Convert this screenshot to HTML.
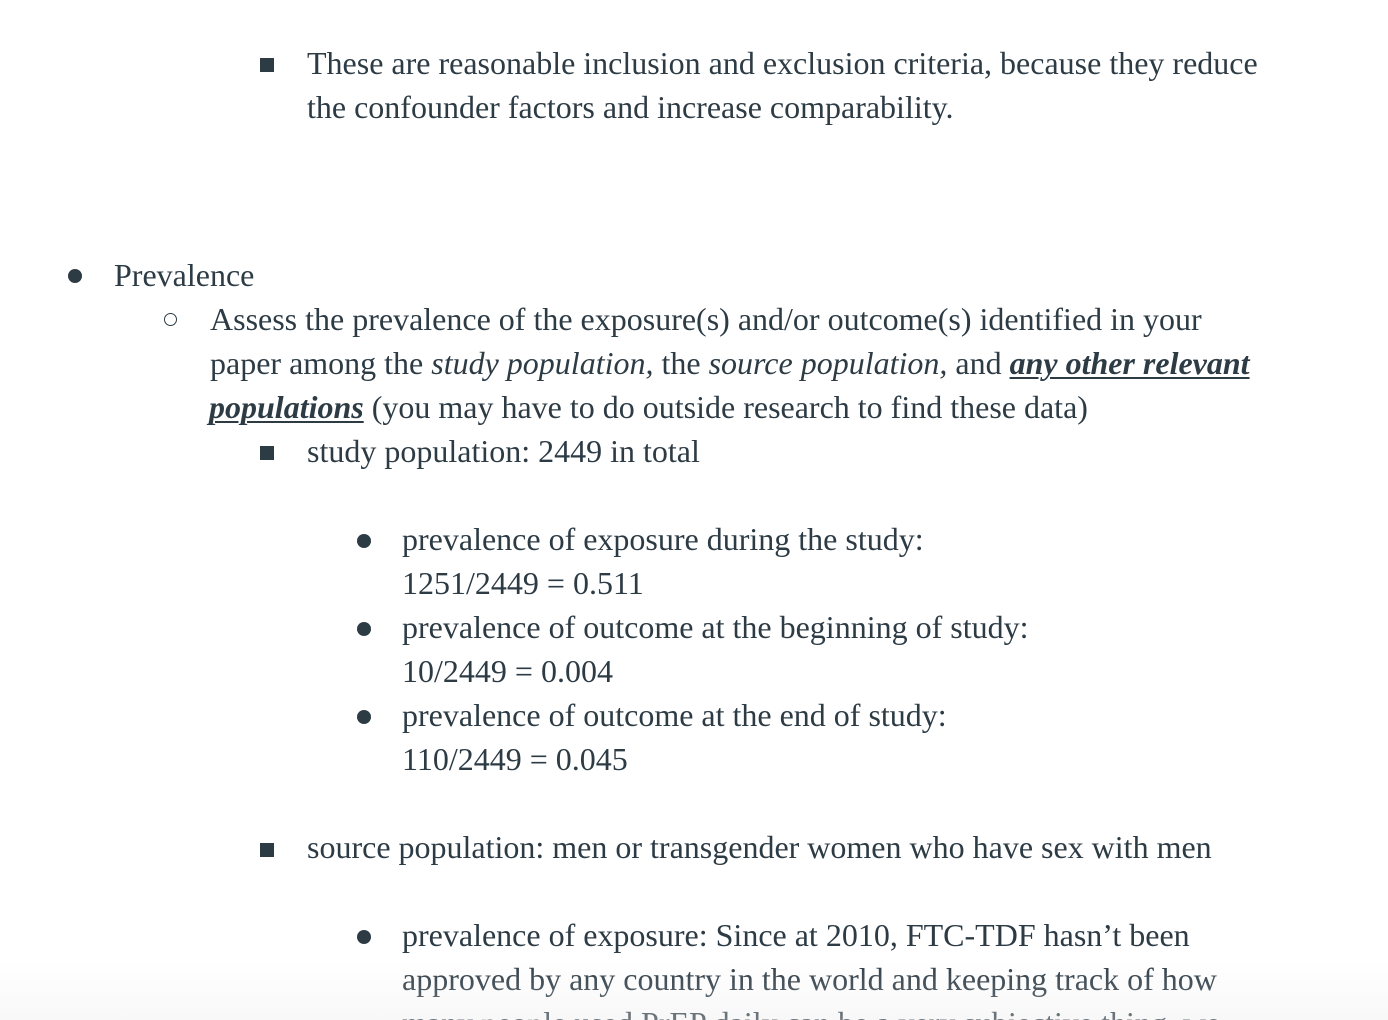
<!DOCTYPE html>
<html><head><meta charset="utf-8"><style>
html,body{margin:0;padding:0;width:1388px;height:1020px;overflow:hidden;background:#fff;}
body{position:relative;font-family:"Liberation Serif",serif;color:#2d3b45;font-size:32px;}
.l{position:absolute;white-space:nowrap;line-height:44px;height:44px;}
.c{font-size:32px;letter-spacing:0px;}
.sq{position:absolute;width:14px;height:14px;background:#2d3b45;}
.dot{position:absolute;width:14px;height:14px;border-radius:50%;background:#2d3b45;}
.circ{position:absolute;width:11px;height:11px;border-radius:50%;border:1.8px solid #2d3b45;}
u{text-decoration-thickness:2px;text-underline-offset:3px;}
.fade{position:absolute;left:0;right:0;top:960px;height:60px;background:linear-gradient(rgba(255,255,255,0),rgba(235,235,235,0.35));}
</style></head><body>
<div class="sq" style="left:260px;top:58px"></div>
<div class="l" style="left:307px;top:41px">These are reasonable inclusion and exclusion criteria, because they reduce</div>
<div class="l" style="left:307px;top:85px">the confounder factors and increase comparability.</div>

<div class="dot" style="left:68px;top:269px"></div>
<div class="l" style="left:114px;top:253px">Prevalence</div>
<div class="circ" style="left:164px;top:313px"></div>
<div class="l" style="left:210px;top:297px">Assess the prevalence of the exposure(s) and/or outcome(s) identified in your</div>
<div class="l" style="left:210px;top:341px">paper among the <i>study population,</i> the <i>source population,</i> and <b><i><u>any other relevant</u></i></b></div>
<div class="l" style="left:209px;top:385px"><b><i><u>populations</u></i></b> (you may have to do outside research to find these data)</div>
<div class="sq" style="left:260px;top:446px"></div>
<div class="l" style="left:307px;top:429px">study population: 2449 in total</div>

<div class="dot" style="left:357px;top:534px"></div>
<div class="l c" style="left:402px;top:517px">prevalence of exposure during the study:</div>
<div class="l c" style="left:402px;top:561px">1251/2449 = 0.511</div>
<div class="dot" style="left:357px;top:622px"></div>
<div class="l c" style="left:402px;top:605px">prevalence of outcome at the beginning of study:</div>
<div class="l c" style="left:402px;top:649px">10/2449 = 0.004</div>
<div class="dot" style="left:357px;top:710px"></div>
<div class="l c" style="left:402px;top:693px">prevalence of outcome at the end of study:</div>
<div class="l c" style="left:402px;top:737px">110/2449 = 0.045</div>

<div class="sq" style="left:260px;top:843px"></div>
<div class="l" style="left:307px;top:825px">source population: men or transgender women who have sex with men</div>
<div class="dot" style="left:357px;top:930px"></div>
<div class="l c" style="left:402px;top:913px">prevalence of exposure: Since at 2010, FTC-TDF hasn’t been</div>
<div class="l c" style="left:402px;top:957px">approved by any country in the world and keeping track of how</div>
<div class="l c" style="left:402px;top:1001px">many people used PrEP daily can be a very subjective thing, we</div>
<div class="fade"></div>
</body></html>
